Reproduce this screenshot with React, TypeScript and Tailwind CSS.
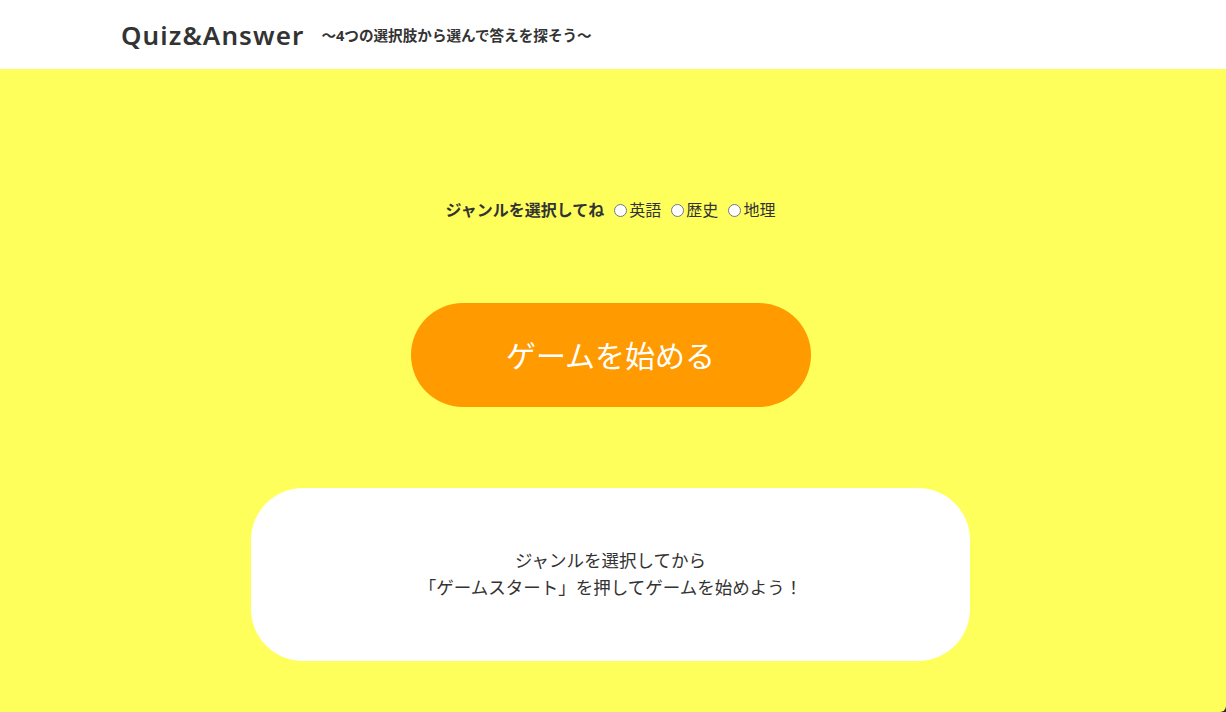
import React from "react";

export default function App() {
  const font = { fontFamily: '"Noto Sans", "Noto Sans CJK JP", sans-serif' };
  return (
    <div className="w-[1226px] h-[712px] bg-[#2a2a2a] overflow-hidden text-[#333333]" style={font}>
      <header className="h-[69px] bg-white flex items-center pl-[121px]">
        <h1 className="text-[26px] font-semibold tracking-[1.1px] leading-none text-[#333]">Quiz&amp;Answer</h1>
        <p className="ml-[17px] mt-[3px] text-[14.6px] font-bold text-[#333]">〜4つの選択肢から選んで答えを探そう〜</p>
      </header>
      <main className="h-[643px] bg-[#ffff5b] rounded-br-[6px] flex flex-col items-center pt-[130px] pr-[5px]">
        <div className="flex items-center h-[22px] text-[16px]">
          <span className="font-bold mr-[10px]">ジャンルを選択してね</span>
          <label className="flex items-center mr-[10px]">
            <input type="radio" name="genre" className="w-[13px] h-[13px] mr-[2px]" />
            <span>英語</span>
          </label>
          <label className="flex items-center mr-[10px]">
            <input type="radio" name="genre" className="w-[13px] h-[13px] mr-[2px]" />
            <span>歴史</span>
          </label>
          <label className="flex items-center">
            <input type="radio" name="genre" className="w-[13px] h-[13px] mr-[2px]" />
            <span>地理</span>
          </label>
        </div>
        <button className="mt-[82px] w-[400px] h-[104px] rounded-full bg-[#ff9a00] text-white text-[30px]">
          ゲームを始める
        </button>
        <div className="mt-[81px] w-[719px] h-[173px] bg-white rounded-[52px] flex flex-col items-center justify-center text-[17.5px] leading-[27px] text-[#333] pb-[2px]">
          <p>ジャンルを選択してから</p>
          <p>「ゲームスタート」を押してゲームを始めよう！</p>
        </div>
      </main>
    </div>
  );
}
